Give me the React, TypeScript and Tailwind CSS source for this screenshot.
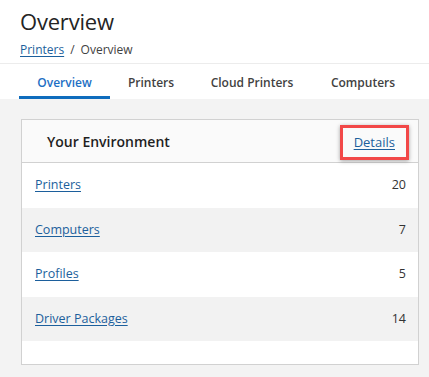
const tabs = [
  { label: "Overview", w: "w-[91px]" },
  { label: "Printers", w: "w-[82px]" },
  { label: "Cloud Printers", w: "w-[120px]" },
  { label: "Computers", w: "w-[102px]" },
];

const rows = [
  { name: "Printers", count: 20 },
  { name: "Computers", count: 7 },
  { name: "Profiles", count: 5 },
  { name: "Driver Packages", count: 14 },
];

export default function App() {
  return (
    <div
      className="h-[377px] w-[429px] overflow-hidden bg-[#f3f3f3] text-[#242424]"
      style={{ fontFamily: '"Open Sans", "Noto Sans", sans-serif' }}
    >
      {/* page header */}
      <div className="bg-white">
        <div className="h-[64px] border-b border-[#ececec] px-5 pt-[5px]">
          <h1 className="text-[22px] leading-[32px] font-normal tracking-[-0.2px] text-[#242424]">
            Overview
          </h1>
          <div className="mt-[4px] flex items-center text-[12px] leading-[18px]">
            <a className="text-[#1c5f9c] underline underline-offset-2">Printers</a>
            <span className="mx-[6px] text-[#424242]">/</span>
            <span className="text-[#424242]">Overview</span>
          </div>
        </div>
        <div className="flex h-[35px] pl-[19px]">
          {tabs.map((t, i) => (
            <div
              key={t.label}
              className={
                (i === 0
                  ? "border-[#0f6cbd] text-[#1d6fc4] "
                  : "border-transparent text-[#424242] ") +
                t.w +
                " flex items-center justify-center whitespace-nowrap border-b-[3px] pt-[5px] text-[12px] font-semibold"
              }
            >
              {t.label}
            </div>
          ))}
        </div>
      </div>

      {/* card */}
      <div className="ml-[21px] mt-[20px] w-[398px] border border-[#d1d1d1] bg-white">
        <div className="flex h-[43px] items-center justify-between border-b border-[#d1d1d1] bg-[#fafafa] pl-[25px] pr-[9px]">
          <span className="text-[14px] font-semibold text-[#1f1f1f]">Your Environment</span>
          <span className="mt-[3px] border-[3px] border-[#f24848] px-[11px] py-[6px] text-[13px] leading-[17px] shadow-[0_1px_4px_rgba(0,0,0,0.35)]">
            <a className="text-[#1c5f9c] underline underline-offset-2">Details</a>
          </span>
        </div>
        {rows.map((r, i) => (
          <div
            key={r.name}
            className={
              i % 2 === 0
                ? "flex h-[45px] items-center justify-between bg-white pl-[13px] pr-[12px] text-[12.5px]"
                : "flex h-[44px] items-center justify-between bg-[#f2f2f2] pl-[13px] pr-[12px] text-[12.5px]"
            }
          >
            <a className="text-[#1c5f9c] underline underline-offset-2">{r.name}</a>
            <span className="text-[#333333]">{r.count}</span>
          </div>
        ))}
        <div className="h-[23px]" />
      </div>
    </div>
  );
}
